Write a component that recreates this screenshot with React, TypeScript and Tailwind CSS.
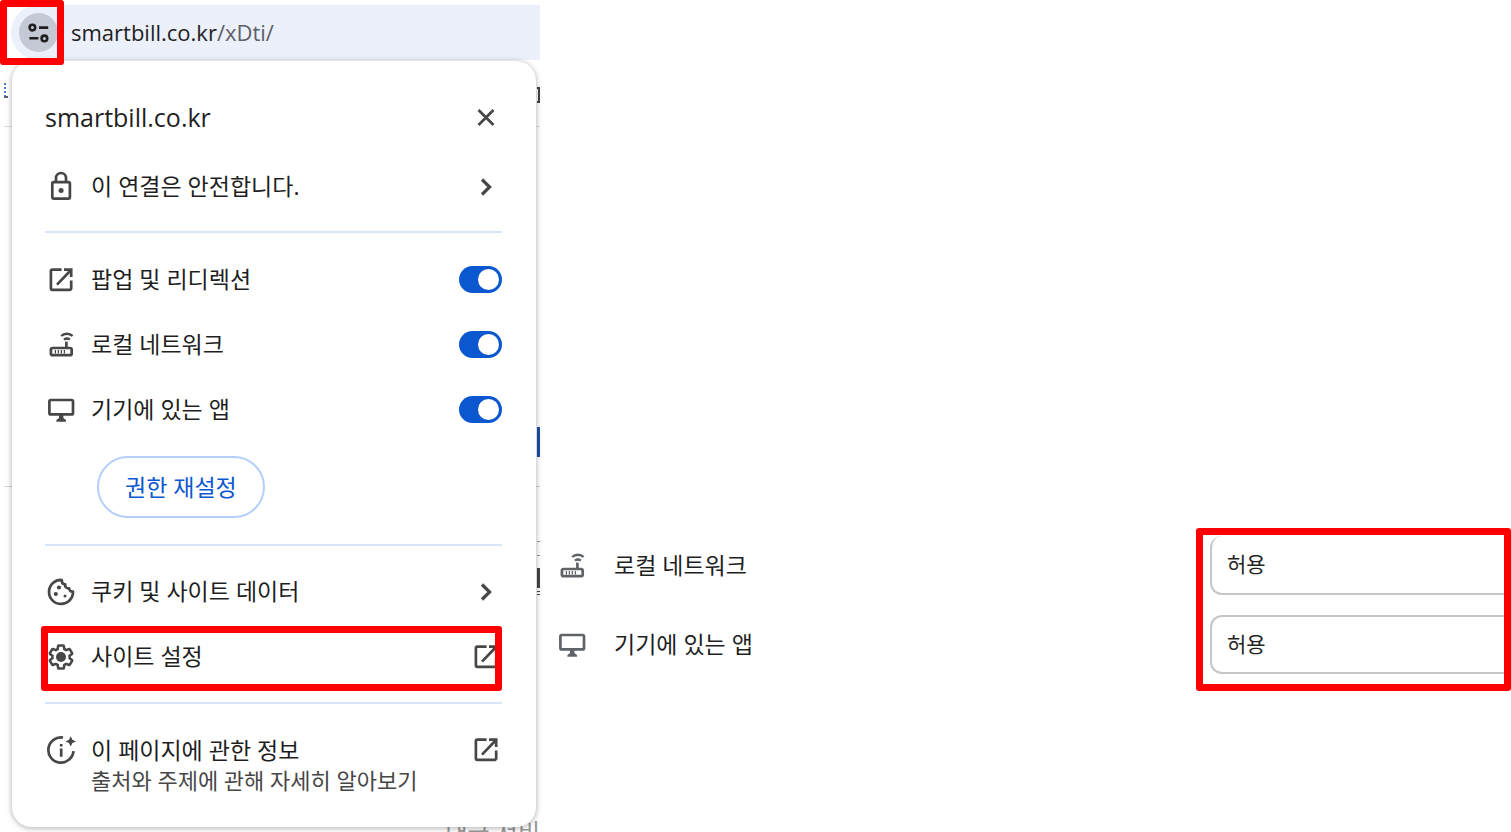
import { ReactNode } from 'react'
import clsx from 'clsx'

function Svg({ children, className }: { children: ReactNode; className?: string }) {
  return (
    <svg
      viewBox="0 0 32 32"
      fill="none"
      stroke="currentColor"
      strokeWidth="2.7"
      aria-hidden="true"
      className={clsx('size-8 shrink-0', className)}
    >
      {children}
    </svg>
  )
}

const LockIcon = () => (
  <Svg>
    <rect x="7.3" y="11.2" width="17.6" height="16.4" rx="1.5" />
    <path d="M11 11.2V7a5 5 0 0 1 10 0v4.2" />
    <circle cx="16.1" cy="19.500" r="2.5" fill="currentColor" stroke="none" />
  </Svg>
)

const OpenIcon = () => (
  <Svg>
    <path d="M16.6 5.6H7.4a1.5 1.5 0 0 0-1.5 1.5v17.2a1.5 1.5 0 0 0 1.5 1.5h17.3a1.5 1.5 0 0 0 1.5-1.5V16.4" />
    <path d="M19 5.6h7.2v7.4M26 6L12 20.6" />
  </Svg>
)

const RouterIcon = ({ className }: { className?: string }) => (
  <Svg className={className}>
    <rect x="5.9" y="19" width="20.8" height="7.2" rx="1.8" />
    <path d="M21.4 12.6V19" />
    <path d="M16.2 7c3-3 8.4-3 11.4 0M19 10.600c1.600-1.200 4.200-1.200 5.800 0" strokeWidth="2.4" />
    <path d="M10.400 21v3.6M13.400 21v3.6M16.4 21v3.6M19.4 21v3.6" strokeWidth="1.3" />
  </Svg>
)

const MonitorIcon = ({ className }: { className?: string }) => (
  <Svg className={className}>
    <rect x="4.4" y="6" width="23.6" height="14.400" rx="1.5" />
    <path d="M14 20.5h4.4v3.6l2.6 1.800v1.900h-9.6v-1.900l2.6-1.800z" fill="currentColor" stroke="none" />
  </Svg>
)

const CookieIcon = () => (
  <Svg>
    <path d="M16.8 4A12 12 0 1 0 28 15.5c-2.2.3-3.800-1-3.900-3.200-2.700.2-4.300-1.500-3.900-3.900-2.200-.2-3.600-1.800-3.400-4.400z" strokeLinejoin="round" />
    <g fill="currentColor" stroke="none">
      <circle cx="14" cy="11.5" r="2.100" />
      <circle cx="10.8" cy="18" r="2.100" />
      <circle cx="20" cy="20" r="1.500" />
    </g>
  </Svg>
)

const SettingsIcon = () => (
  <Svg>
    <path
      transform="translate(2.2 2.2) scale(1.15)"
      strokeWidth="2.200"
      d="M19.43 12.98c.04-.32.07-.64.07-.98s-.03-.66-.07-.98l2.11-1.65c.19-.15.24-.42.12-.64l-2-3.46c-.09-.16-.26-.25-.44-.25-.06 0-.12.01-.17.03l-2.49 1c-.52-.4-1.08-.73-1.69-.98l-.38-2.65A.488.488 0 0 0 14 2h-4c-.25 0-.46.18-.49.42l-.38 2.65c-.61.25-1.17.59-1.69.98l-2.49-1a.566.566 0 0 0-.18-.03c-.17 0-.34.09-.43.25l-2 3.46c-.13.22-.07.49.12.64l2.11 1.65c-.04.32-.07.65-.07.98s.03.66.07.98l-2.11 1.65c-.19.15-.24.42-.12.64l2 3.46c.09.16.26.25.44.25.06 0 .12-.01.17-.03l2.49-1c.52.4 1.08.73 1.69.98l.38 2.65c.03.24.24.42.49.42h4c.25 0 .46-.18.49-.42l.38-2.65c.61-.25 1.17-.59 1.69-.98l2.49 1c.06.02.12.03.18.03.17 0 .34-.09.43-.25l2-3.46c.12-.22.07-.49-.12-.64l-2.11-1.65z"
    />
    <circle cx="16" cy="16" r="5" fill="currentColor" stroke="none" />
  </Svg>
)

const InfoIcon = () => (
  <Svg>
    <path d="M18 3.6A12.6 12.6 0 1 0 28.5 17.2" />
    <path d="M16.2 14.4v8.4M16.2 10v2.6" />
    <path d="M25.7 2.2l1.7 3.5 3.500 1.700-3.500 1.700-1.700 3.500-1.700-3.500-3.500-1.700 3.500-1.700z" fill="currentColor" stroke="none" />
  </Svg>
)

const ChevronIcon = () => (
  <Svg>
    <path d="M12 8.5l7.6 7.5-7.6 7.5" strokeWidth="3.2" />
  </Svg>
)

const CloseIcon = () => (
  <Svg>
    <path d="M8.5 8l15 15M23.5 8l-15 15" />
  </Svg>
)

const TuneIcon = () => (
  <svg viewBox="0 0 24 24" fill="none" stroke="currentColor" strokeWidth="2.6" aria-hidden="true" className="size-6">
    <circle cx="5.4" cy="6.6" r="2.800" />
    <path d="M12 6.600h9.200M2.400 17.200h9" />
    <circle cx="17.400" cy="17.400" r="2.800" />
  </svg>
)

const permissions = [
  { id: 'popup', label: '팝업 및 리디렉션', icon: <OpenIcon /> },
  { id: 'network', label: '로컬 네트워크', icon: <RouterIcon /> },
  { id: 'apps', label: '기기에 있는 앱', icon: <MonitorIcon /> },
]

const Divider = ({ className }: { className: string }) => (
  <hr className={clsx('border-0 h-0.5 bg-[#d8e5fb]', className)} />
)

// slivers of the web page that show around the popup
function PageBehind() {
  return (
    <div className="absolute inset-y-0 left-1 right-0 overflow-hidden" aria-hidden="true">
      <div className="absolute left-0 top-[83px] h-[14px] w-0.5 border-l-2 border-dotted border-[#4a7cc4]" />
      <div className="absolute left-0 top-24 h-0.5 w-1 bg-[#5a6170]" />
      <div className="absolute inset-x-0 top-[126px] h-px bg-[#dcdcdc]" />
      <div className="absolute right-0 top-[87px] h-4 w-[3px] border-2 border-l-0 border-[#444]" />
      <div className="absolute right-0 top-[427px] h-[30px] w-[3px] bg-[#1c4fa8]" />
      <div className="absolute inset-x-0 top-[486px] h-px bg-[#d4d4d4]" />
      <div className="absolute right-0 top-[541px] h-[15px] w-[3px] border-y border-[#999]" />
      <div className="absolute right-0 top-[568px] h-5 w-[3px] bg-[#444]" />
      <div className="absolute right-0 top-[591px] h-1 w-[3px] border-y border-[#444]" />
      <div className="absolute right-0 top-[816px] whitespace-nowrap text-2xl text-[#999]">대금 서비</div>
    </div>
  )
}

function SitePopup() {
  return (
    <section className="relative mt-px ml-3 mr-1 rounded-[20px] bg-white pt-6 pb-[33px] pl-[33px] pr-[34px] shadow-[0_1px_5px_1px_rgba(0,0,0,0.25)]">
      <div className="flex h-[65px] items-center justify-between">
        <h1 className="text-[25px]">smartbill.co.kr</h1>
        <button type="button" aria-label="닫기" className="text-[#474747]">
          <CloseIcon />
        </button>
      </div>
      <button type="button" className="mt-1 flex h-[65px] w-full items-center gap-[14px] text-left text-[#474747]">
        <LockIcon />
        <span className="flex-1 text-[#1f1f1f]">이 연결은 안전합니다.</span>
        <ChevronIcon />
      </button>

      <Divider className="mt-3" />
      <div className="mt-[14px]">
        {permissions.map((p) => (
          <label key={p.id} htmlFor={p.id} className="flex h-[65px] items-center gap-[14px] text-[#474747]">
            {p.icon}
            <span className="flex-1 text-[#1f1f1f]">{p.label}</span>
            <input
              id={p.id}
              type="checkbox"
              role="switch"
              defaultChecked
              className="flex h-[27px] w-[43px] appearance-none items-center rounded-full bg-[#c4c7c5] px-[3px] before:size-[21px] before:rounded-full before:bg-white checked:justify-end checked:bg-[#0b57d0]"
            />
          </label>
        ))}
      </div>
      <button type="button" className="mt-[14px] ml-[52px] h-[62px] rounded-full border-2 border-[#b4cffb] px-[26px] text-[#0b57d0]">
        권한 재설정
      </button>

      <Divider className="mt-[26px]" />
      <button type="button" className="mt-[13px] flex h-[65px] w-full items-center gap-[14px] text-left text-[#474747]">
        <CookieIcon />
        <span className="flex-1 text-[#1f1f1f]">쿠키 및 사이트 데이터</span>
        <ChevronIcon />
      </button>
      <a href="#settings" className="relative flex h-[65px] items-center gap-[14px] text-[#474747]">
        <SettingsIcon />
        <span className="flex-1 text-[#1f1f1f]">사이트 설정</span>
        <OpenIcon />
        <span className="absolute top-0.5 -bottom-0.5 -left-1 right-0 rounded-[3px] border-[7px] border-[#ff0000]" />
      </a>

      <Divider className="mt-[13px]" />
      <a href="#about" className="mt-[30px] flex items-start gap-[14px] text-[#474747]">
        <InfoIcon />
        <span className="flex-1">
          <span className="block leading-8 text-[#1f1f1f]">이 페이지에 관한 정보</span>
          <span className="block text-[22px] leading-7">출처와 주제에 관해 자세히 알아보기</span>
        </span>
        <OpenIcon />
      </a>
    </section>
  )
}

function SiteSettings() {
  return (
    <section className="flex flex-1 items-start pt-[528px]">
      <div className="flex flex-1 flex-col gap-5 pt-2 pl-4">
        <label htmlFor="allow-network" className="flex h-[59px] items-center gap-[26px]">
          <RouterIcon className="text-[#5f6368]" />
          로컬 네트워크
        </label>
        <label htmlFor="allow-apps" className="flex h-[59px] items-center gap-[26px]">
          <MonitorIcon className="text-[#5f6368]" />
          기기에 있는 앱
        </label>
      </div>
      <div className="flex w-[315px] flex-col gap-5 rounded-[3px] border-[7px] border-[#ff0000] pt-px pb-[10px] pl-[7px] text-[21px]">
        <select id="allow-network" className="h-[59px] appearance-none rounded-l-xl border-2 border-t-0 border-r-0 border-[#c6c6c6] bg-white px-[15px]">
          <option>허용</option>
        </select>
        <select id="allow-apps" className="h-[59px] appearance-none rounded-l-xl border-2 border-r-0 border-[#c6c6c6] bg-white px-[15px]">
          <option>허용</option>
        </select>
      </div>
    </section>
  )
}

export default function App() {
  return (
    <main className="flex h-screen overflow-hidden bg-white font-['Open_Sans','Noto_Sans_CJK_KR',sans-serif] text-[23px] text-[#1f1f1f]">
      <div className="relative w-[540px] shrink-0">
        <PageBehind />
        <div className="relative mt-[5px] ml-[11px] flex h-[55px] items-center gap-[13px] rounded-l-full bg-[#ebf0fa] pl-2">
          <button type="button" aria-label="사이트 정보 보기" className="flex size-[39px] items-center justify-center rounded-full bg-[#c4c9d5]">
            <TuneIcon />
          </button>
          <p className="text-[22px]">
            smartbill.co.kr<span className="text-[#5c5f66]">/xDti/</span>
          </p>
        </div>
        <SitePopup />
        <div className="absolute top-0 left-0 h-[65px] w-16 rounded-[3px] border-[7px] border-[#ff0000]" />
      </div>
      <SiteSettings />
    </main>
  )
}
